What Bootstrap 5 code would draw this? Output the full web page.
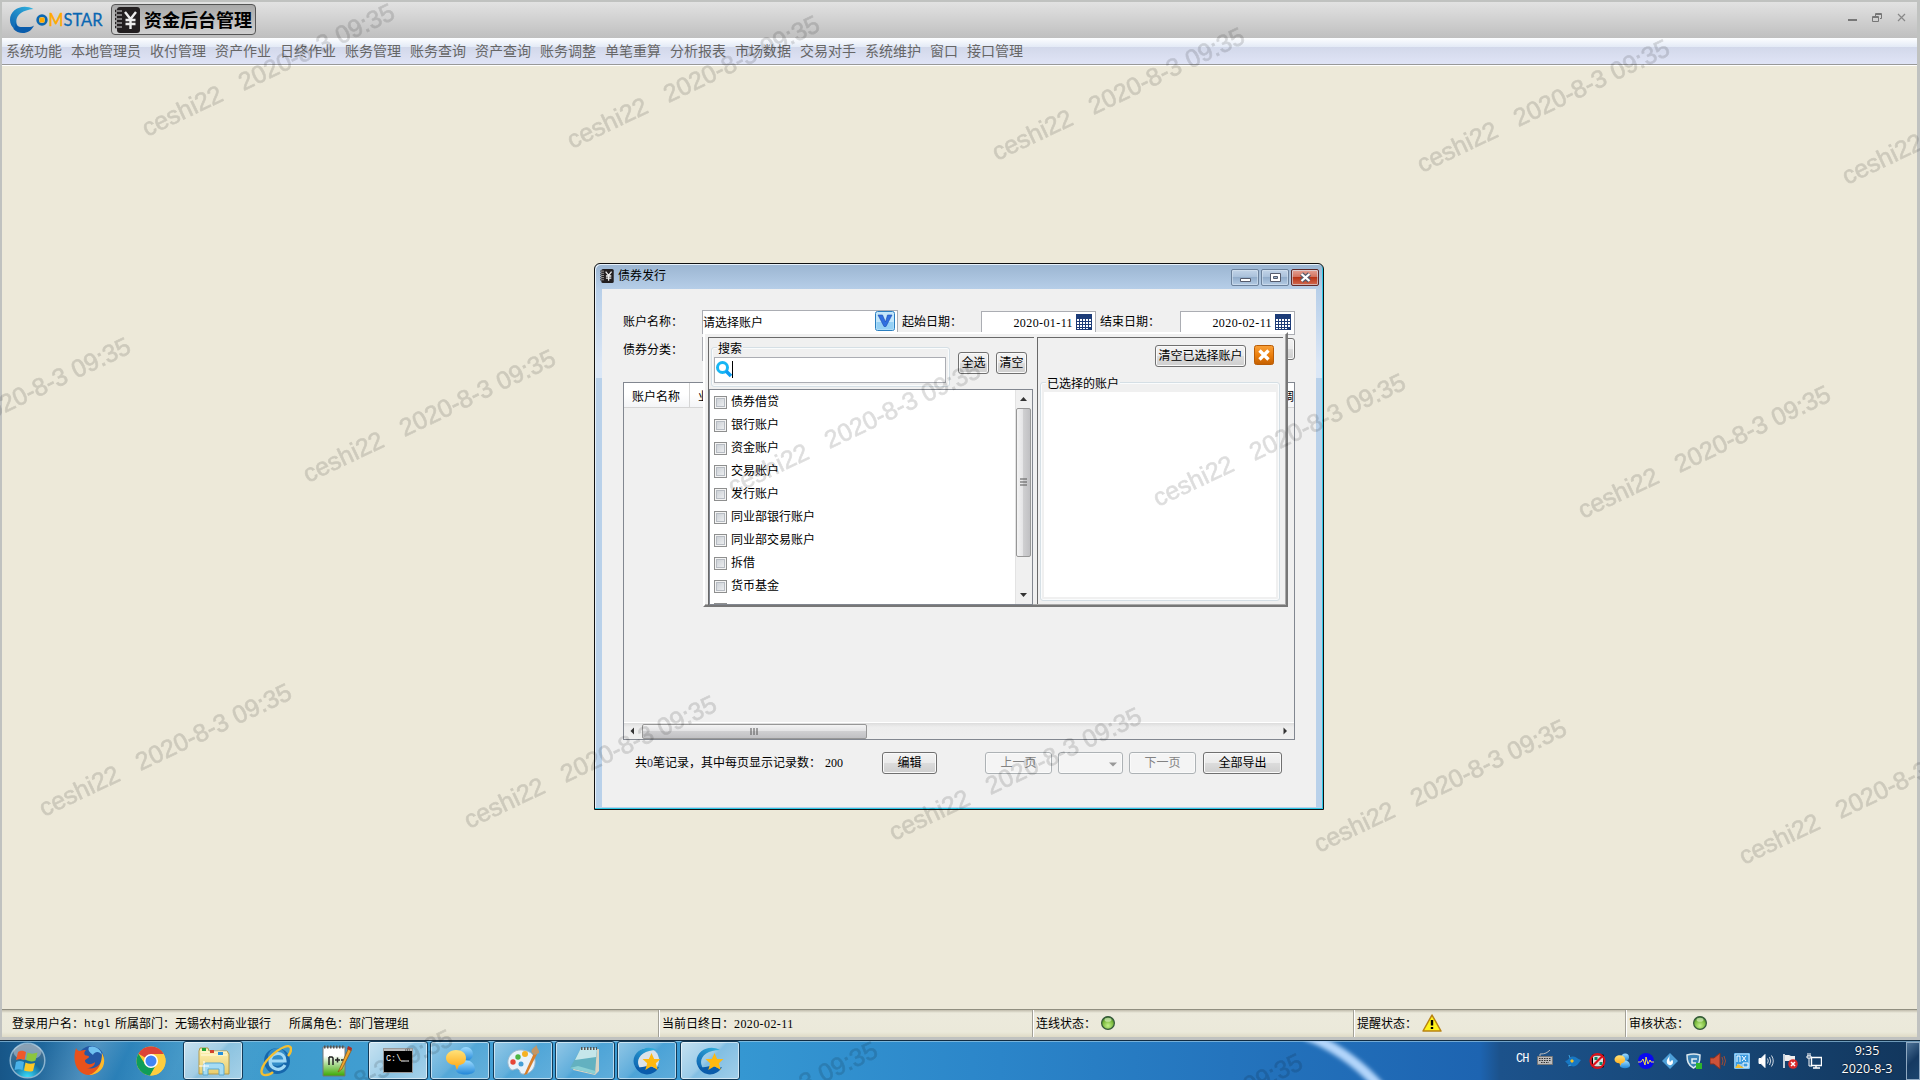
<!DOCTYPE html>
<html lang="zh-CN">
<head>
<meta charset="utf-8">
<title>资金后台管理</title>
<link rel="stylesheet" href="https://cdn.jsdelivr.net/npm/bootstrap@5.3.0/dist/css/bootstrap.min.css">
<style>
body{width:1920px;height:1080px;overflow:hidden;font:12px/16px "Liberation Serif","Noto Sans CJK SC",sans-serif;color:#000;background:#ede9d9;position:relative}
svg{display:block;flex:none}
.app-window{height:1040px;border:solid #c0c2c0;border-width:2px 3px 3px 2px;box-shadow:inset 0 0 0 0}
.app-head{height:36px;background:linear-gradient(#e2e2e2,#bfbfbf);padding:2px 0 0 8px}
.module-btn{width:145px;height:31px;border:1px solid #555;border-radius:4px;background:linear-gradient(#a9a9a9,#cfcfcf);font:700 18px/26px "Noto Sans CJK SC",sans-serif;padding-left:3px;gap:4px;margin-left:8px}
.module-btn span{margin-top:-2px}
.win-ctl{gap:15px;padding:9px 11px 0 0}
.menu-strip{height:28px;background:linear-gradient(#fdfeff 0,#e3eaf6 9px,#d2d8ea 9px,#e0e4f6 26px);border-bottom:1px solid #fff;box-shadow:inset 0 -1px #999;font:14px/25px "Noto Sans CJK SC",sans-serif;color:#666;gap:9px;padding-left:4px}
.status-strip{height:28px;border-top:1px solid #918f80;background:linear-gradient(#c0bcac 0,#eceadc 3px,#ebe9da 22px,#dedac6 27px);line-height:28px}
.status-strip>div+div{border-left:1px solid #a3a197;box-shadow:inset 1px 0 #fff;padding-left:3px}
.dt{letter-spacing:.4px}
/* dialog */
.dlg{position:absolute;left:594px;top:263px;width:730px;height:547px;border:1px solid #111;border-radius:6px 6px 0 0;background:linear-gradient(#9bb5d1,#b7cfe9 26px,#dbe7f6 100px,#dbe7f6 114px,#b9d1ea 114px);box-shadow:inset -1px -1px #2bc8e6,inset 1px 1px #e8f2fb}
.dlg-title{height:25px;padding-left:5px;font:12px/22px "Noto Sans CJK SC",sans-serif;gap:4px}
.cap-btn{width:28px;height:17px;border:1px solid #6c819b;border-radius:2px;background:linear-gradient(#c2d4e8,#a9c0da 48%,#92adcb 50%,#b4cbe4);box-shadow:inset 0 0 0 1px #d7e4f299}
.cap-x{border-color:#602a2a;background:linear-gradient(#e5a295,#d2705d 48%,#b83417 50%,#d26a50)}
.dlg-body{margin:0 7px 2px 7px;height:518px;background:#f0f0f0;padding:21px 21px 0 21px}
.fld{background:#fff;border:1px solid #abadb3;height:24px}
.grid-box{width:672px;height:358px;border:1px solid #828790;margin-top:19px}
.grid-head{height:25px;background:linear-gradient(#fff 45%,#f4f5f7);border-bottom:1px solid #d5d5d5;line-height:28px}
.xbtn{height:22px;border:1px solid #707070;border-radius:3px;background:linear-gradient(#f3f3f3,#ebebeb 48%,#dcdcdc 50%,#cfcfcf);box-shadow:inset 0 0 0 1px #fafafa;text-align:center;line-height:20px;white-space:nowrap;flex:none}
.xoff{border-color:#adb2b5;background:#f4f4f4;color:#838383}
.hbar{height:17px;background:linear-gradient(#dcdcdc,#ededed 4px,#efefef);border-top:1px solid #fff}
.hthumb{width:225px;height:15px;border:1px solid #979797;border-radius:2px;background:linear-gradient(#f4f4f4,#e4e4e6 45%,#cfcfd1 50%,#c0c0c3)}
/* drop-down panel */
.pick{position:absolute;left:703px;top:332px;width:585px;height:275px;background:#f0f0f0;border-style:solid;border-width:2px 2px 2px 2px;border-color:#fff #777 #777 #fff;padding:3px 2px 0 3px;box-shadow:inset -1px -1px #aaa}
.pane-l{width:326px;height:268px;border-top:1px solid #696969;border-left:1px solid #696969}
.pane-r{width:246px;height:267px;border-top:1px solid #696969;border-left:1px solid #696969;margin-left:3px}
.grp{border:1px solid #d5dfe5;border-radius:3px;position:relative;box-shadow:inset 0 0 0 1px #fafcfd}
.grp>label{position:absolute;left:5px;top:-7px;background:#f0f0f0;padding:0 1px;line-height:16px}
.srch{height:26px;width:232px;margin:9px 0 0 2px;background:#fff;border:1px solid #abadb3;padding:3px 0 0 1px}
.items{height:216px;width:324px;border:1px solid #828790;background:#fff;overflow:hidden;margin-top:2px}
.items ul{padding:1px 0 0 4px;margin:0;list-style:none}
.items li{height:23px;line-height:23px;display:flex;align-items:center;gap:4px}
.ck{width:13px;height:13px;border:1px solid #8e8f8f;background:linear-gradient(135deg,#c5cad0,#f4f5f6);box-shadow:inset 0 0 0 1px #f4f4f4,inset 0 0 0 2px #b7bcc3;flex:none;margin-top:-1px}
.vbar{width:17px;background:#f0f0f0;border-left:1px solid #e3e3e3}
.vthumb{width:15px;height:149px;border:1px solid #979797;border-radius:2px;background:linear-gradient(90deg,#f4f4f4,#e4e4e6 45%,#cfcfd1 50%,#c0c0c3)}
/* taskbar */
.tbar{height:40px;position:relative;background:linear-gradient(115deg,transparent 40px,#ffffff30 90px,transparent 120px,#ffffff14 170px,transparent 260px),linear-gradient(90deg,#175688 0,#2679b2 90px,#3d9acb 220px,#429fd4 450px,#3597d2 740px,#2b85c9 1000px,#2474bd 1230px,#1d64b1 1480px,#1c528b 1500px,#174777 1700px,#12365c 1920px);border-top:1px solid #112c42;box-shadow:inset 0 1px #9ccbe6aa}
.tk{width:62px;height:39px;display:flex;align-items:center;justify-content:center;flex:none}
.tk.on{width:60px;margin-right:2px;height:39px;border:1px solid #123a58;border-radius:3px;box-shadow:inset 0 0 0 1px #ffffff90;background:linear-gradient(135deg,#ffffff70,#ffffff30 45%,#ffffff18 50%,#ffffff30)}
.tk.act{background:linear-gradient(135deg,#ffffffb5,#ffffff80 45%,#ffffff60 50%,#ffffff88)}
.swoosh{position:absolute;left:1290px;top:0}
.clock{font:12.5px/18px "Open Sans",sans-serif;color:#fff;text-align:center;width:70px;text-shadow:0 0 2px #000}
.peek{width:14px;height:38px;border:1px solid #8fa9c2;background:linear-gradient(135deg,#4f7397,#153a62 50%,#1c456e);margin-left:4px;margin-top:1px}
.marks{position:absolute;left:0;top:0;pointer-events:none}
</style>
<script src="https://cdn.jsdelivr.net/npm/bootstrap@5.3.0/dist/js/bootstrap.bundle.min.js"></script>
</head>
<body>
<svg width="0" height="0" class="position-absolute">
<defs>
<linearGradient id="gc" x1="1" y1="0" x2="0" y2="1"><stop offset="0" stop-color="#35b5e0"/><stop offset="1" stop-color="#0b5fae"/></linearGradient>
<radialGradient id="gg" cx=".5" cy=".7" r=".7"><stop offset="0" stop-color="#c2f08a"/><stop offset=".6" stop-color="#7cba3e"/><stop offset="1" stop-color="#2c6a1e"/></radialGradient>
<radialGradient id="gorb" cx=".5" cy="1" r=".9"><stop offset="0" stop-color="#3be4ff"/><stop offset=".5" stop-color="#15699c"/><stop offset="1" stop-color="#4d6f8d"/></radialGradient>
<linearGradient id="gor" x1="0" y1="0" x2="0" y2="1"><stop offset="0" stop-color="#f9a13a"/><stop offset=".5" stop-color="#ec7f0d"/><stop offset="1" stop-color="#c45f00"/></linearGradient>
<linearGradient id="gbl" x1="0" y1="0" x2="0" y2="1"><stop offset="0" stop-color="#9edcff"/><stop offset="1" stop-color="#2287d8"/></linearGradient>
<linearGradient id="gye" x1="0" y1="0" x2="0" y2="1"><stop offset="0" stop-color="#ffe27a"/><stop offset="1" stop-color="#ffa40c"/></linearGradient>
<linearGradient id="gfo" x1="0" y1="0" x2="0" y2="1"><stop offset="0" stop-color="#fff3b8"/><stop offset="1" stop-color="#e9cd6c"/></linearGradient>
<linearGradient id="gn" x1="0" y1="0" x2="0" y2="1"><stop offset=".3" stop-color="#fff"/><stop offset="1" stop-color="#3aa800"/></linearGradient>
<symbol id="book" viewBox="0 0 25 26"><rect x="2" y="0" width="23" height="26" rx="3" fill="#231f20"/><path d="M0 4h6M0 8h6M0 12h6M0 16h6M0 20h6" stroke="#231f20" stroke-width="2.4"/><path d="M1 4h6M1 8h6M1 12h6M1 16h6M1 20h6" stroke="#ddd" stroke-width="1.2"/><path d="M10 5l5.500 7 5.500-7M15.500 12v10M10.500 13h10M10.500 17h10" stroke="#eee" stroke-width="2.400" fill="none"/></symbol>
<symbol id="cal" viewBox="0 0 16 16"><path fill="#1d3c78" d="M0 0h16v16H0z"/><path fill="#fff" d="M1 5h2v2H1zm3 0h2v2H4zm3 0h2v2H7zm3 0h2v2h-2zm3 0h2v2h-2zM1 8h2v2H1zm3 0h2v2H4zm3 0h2v2H7zm3 0h2v2h-2zM1 11h2v2H1zm3 0h2v2H4zm3 0h2v2H7zm6-3h2v2h-2zM10 11h2v2h-2zm3 0h2v2h-2zM1 14h2v1H1zm3 0h2v1H4zm3 0h2v1H7zm3 0h2v1h-2z"/></symbol>
<symbol id="star" viewBox="0 0 30 30"><path d="M25 4C15-1.500 2 4 1.500 15c0 4 2 7 5 9 1-2 1-3 0-5C4 11 12 4 25 4z" fill="url(#gc)"/><path d="M3 20c4 11 19 11 24 1-4 2-7-1-11-1-5 0-6 3-13 0z" fill="#0a5cab"/><path d="M19.500 7l2.600 6h6.400l-4.700 4.200 2 6.800-6.300-3.700-6.200 3.700 1.900-6.800-4.700-4.200h6.400z" fill="#ffb90f"/></symbol>
<symbol id="chat" viewBox="0 0 30 30"><circle cx="21" cy="8" r="7" fill="url(#gbl)"/><path d="M11 24c0-13 19-13 19 0 0 6-19 6-19 0z" fill="url(#gbl)"/><path d="M11 4c6 0 10 3 10 8s-4 7-7 7l-2 5-2-5c-5 0-9-3-9-7s4-8 10-8z" fill="url(#gye)"/></symbol>
<symbol id="ball" viewBox="0 0 14 14"><circle cx="7" cy="7" r="6.400" fill="url(#gg)" stroke="#35593c" stroke-width="1.200"/><ellipse cx="7" cy="3.800" rx="3.500" ry="2" fill="#e3f7d0" opacity=".6"/></symbol>
</defs>
</svg>

<div class="app-window d-flex flex-column">
  <header class="app-head d-flex align-items-start">
    <svg width="93" height="30" viewBox="0 0 93 30"><path d="M23.500 5C13-.5 0 5 0 16c0 4 2 7 4.500 9C8 27 8 24 7 21 4 13 11 6 23.500 5z" fill="url(#gc)"/><path d="M5 17c1 4 3 6 7 6 4-.5 9 1 12-1.500-4 9-15 10-21 3C5 25 6 22 5 17z" fill="#0a5cab"/><circle cx="32" cy="16" r="4.300" fill="none" stroke="#0a67b2" stroke-width="2.800"/><path d="M29.500 13.500h5v5h-5z" fill="#fa0"/><text x="38.500" y="21.500" font-family="Lato" font-size="17.500" textLength="15" lengthAdjust="spacingAndGlyphs" fill="#fa0" stroke="#fa0" stroke-width=".5">M</text><text x="53.500" y="21.500" font-family="Lato" font-size="17.500" textLength="39" lengthAdjust="spacingAndGlyphs" fill="#0a67b2" stroke="#0a67b2" stroke-width=".3">STAR</text></svg>
    <div class="module-btn d-flex align-items-center"><svg width="25" height="26"><use href="#book"/></svg><span>资金后台管理</span></div>
    <div class="win-ctl d-flex ms-auto">
      <svg width="9" height="9"><path d="M0 7h9" stroke="#777" stroke-width="2"/></svg>
      <svg width="10" height="9" fill="none" stroke="#777"><path d="M3.500 3V.5h6v5H8M3 1.500h7M.5 3.500h6v5h-6zM0 4.500h7"/></svg>
      <svg width="9" height="9"><path d="M1 1l7 7M8 1L1 8" stroke="#888" stroke-width="1.200"/></svg>
    </div>
  </header>
  <nav class="menu-strip d-flex">
    <span>系统功能</span><span>本地管理员</span><span>收付管理</span><span>资产作业</span><span>日终作业</span><span>账务管理</span><span>账务查询</span><span>资产查询</span><span>账务调整</span><span>单笔重算</span><span>分析报表</span><span>市场数据</span><span>交易对手</span><span>系统维护</span><span>窗口</span><span>接口管理</span>
  </nav>
  <main class="flex-fill"></main>
  <footer class="status-strip d-flex">
    <div style="width:656px;padding-left:10px" class="d-flex"><span>登录用户名：</span><span style="width:31px;font:11px/29px 'Liberation Mono',monospace">htgl</span><span>所属部门：无锡农村商业银行</span><span style="margin-left:18px">所属角色：部门管理组</span></div>
    <div style="width:374px">当前日终日：<span class="dt">2020-02-11</span></div>
    <div style="width:321px" class="d-flex">连线状态：<svg width="14" height="14" style="margin:6px 0 0 5px"><use href="#ball"/></svg></div>
    <div style="width:272px" class="d-flex">提醒状态：<svg width="20" height="18" viewBox="0 0 20 18" style="margin:4px 0 0 5px"><path d="M10 1l9 16H1z" fill="#fff31a" stroke="#b98312" stroke-width="1.500" stroke-linejoin="round"/><path d="M10 6v5.500M10 13v2" stroke="#000" stroke-width="2.400"/></svg></div>
    <div class="d-flex flex-fill">审核状态：<svg width="14" height="14" style="margin:6px 0 0 4px"><use href="#ball"/></svg></div>
  </footer>
</div>

<footer class="tbar d-flex">
  <svg class="swoosh" width="110" height="39"><defs><filter id="bl"><feGaussianBlur stdDeviation="2"/></filter></defs><path d="M8-6Q50 10 82 46" stroke="#b3d6fb" stroke-width="10" fill="none" filter="url(#bl)" transform="translate(8 0)"/></svg>
  <div class="tk" style="width:54px"><svg width="37" height="37" viewBox="0 0 37 37"><circle cx="18.500" cy="18.500" r="17.300" fill="url(#gorb)" stroke="#8bb4cf" stroke-width="1.500"/><ellipse cx="18.500" cy="10" rx="14" ry="8" fill="#fff" opacity=".35"/><path d="M9 10c3-2 5-1.500 8 0l-1.500 8c-3-1.500-5-1.500-8.500 0z" fill="#f0592a"/><path d="M18.500 10.500c3 1.500 6 1.500 10 0l-2 8c-3 1.500-6 1-9.500-.5z" fill="#8cc63f"/><path d="M7 20c3-1.500 5.500-1 8 0l-1.500 8c-2.500-1-4.500-1-8 0z" fill="#4ab2ea"/><path d="M16.500 20.500c3 1.500 6 1.500 9.500.5l-2 8c-3 1-6 .5-9-.5z" fill="#fcc826"/></svg></div>
  <div class="tk" style="width:70px"><svg width="31" height="31" viewBox="0 0 31 31"><circle cx="17" cy="14" r="13" fill="#2458a5"/><path d="M15 2c6-2 12 2 13 8-3-5-8-3-9 0-2-2-6-4-4-8z" fill="#6fc0f0"/><path d="M2 3c1 2 2 3 4 3 2-1 4-1 6-1-2 2-2 4-1 5 1 1 4 0 4 2-1 2-4 2-4 4 1 4 7 4 10 1 0 4-4 6-8 6 8 2 15-3 16-12 2 11-5 19-14 19C5 30-3 19 2 3z" fill="#e8521b"/><path d="M28 8c6 11-1 22-13 22 9-3 13-11 13-22z" fill="#fcb92a"/></svg></div>
  <div class="tk" style="width:54px"><svg width="30" height="30" viewBox="0 0 30 30"><circle cx="15" cy="15" r="14.500" fill="#fc3"/><path d="M15 15L2.500 7.700A14.500 14.500 0 0 1 27.700 8H15z" fill="#dc4437"/><path d="M2.400 7.800A14.500 14.500 0 0 0 14 29.500l6.500-11.500L9 18z" fill="#0f9d58"/><path d="M15 8h12.700a14.500 14.500 0 0 1-13.500 21.500L21 18z" fill="#fecd3f"/><circle cx="15" cy="15" r="7" fill="#fff"/><circle cx="15" cy="15" r="5.500" fill="#4285f4"/></svg></div>
  <div class="tk on act" style="margin-left:5px"><svg width="33" height="30" viewBox="0 0 33 30"><path d="M2 5l1-3h8l1 3h18l2 3v20H2z" fill="url(#gfo)" stroke="#b59a4a"/><path d="M4 9h26M4 6h26" stroke="#fffbe0"/><path d="M5 2h4v3H5z" fill="#21a336"/><path d="M13 4h4v3h-4z" fill="#d3422c"/><path d="M21 6h5v3h-5z" fill="#2690dc"/><path d="M6 29v-9q0-3 3-3h14q4 0 4 3v9h-5v-6H11v6z" fill="#a5dcf4" stroke="#5ba8d0"/><path d="M2 20h10M7 15v10" stroke="#fff"/></svg></div>
  <div class="tk" style="width:61px"><svg width="32" height="32" viewBox="0 0 32 32"><circle cx="17" cy="16" r="13" fill="#1667ac"/><circle cx="17" cy="12" r="9" fill="#4fb3e6" opacity=".5"/><path d="M11 16h14c0-10-14-10-15 0 0 9 11 11 15 4" fill="none" stroke="#9fd8f6" stroke-width="3.200"/><path d="M6 30c-7 1-6-8 4-18C20 2 31-2 31 4c0 3-2 6-3 7M6 30c3 0 5-1 7-3" fill="none" stroke="#f4bf32" stroke-width="2.400"/></svg></div>
  <div class="tk"><svg width="30" height="32" viewBox="0 0 30 32"><path d="M1 2h22v29H1z" fill="url(#gn)" stroke="#777"/><path d="M2 2h21" stroke="#555" stroke-width="3" stroke-dasharray="1.500 1.500"/><path d="M7 20v-8M7 12h3l1 1v7M13 15h5M15.500 12.500v5M19 15h4" stroke="#222" stroke-width="1.500" fill="none"/><path d="M27 2l-9 21-2 4 4-3L30 4z" fill="#f0a62e" stroke="#8a5a19" stroke-width=".8"/><path d="M26 1l4 2-1 3-4-2z" fill="#a9322c"/></svg></div>
  <div class="tk on act"><svg width="30" height="25" viewBox="0 0 30 25"><path d="M.5.500h29v24H.5z" fill="#000" stroke="#999"/><path d="M1 2h28" stroke="#bbb" stroke-width="2"/><path d="M22 2h6" stroke="#444" stroke-dasharray="1 1"/><text x="3" y="13" font-family="Liberation Mono" font-size="8.500" fill="#fff">C:\</text><path d="M18 13h8" stroke="#fff"/></svg></div>
  <div class="tk on"><svg width="30" height="30"><use href="#chat"/></svg></div>
  <div class="tk on" style="margin-left:1px"><svg width="33" height="31" viewBox="0 0 33 31"><path d="M15 5C5 4-2 14 2 22c3 6 6 1 9 2 3 2 1 4 4 5 10 1 14-8 13-14-1-7-6-9-13-10z" fill="#e8f2fa" stroke="#9db9cc"/><circle cx="6" cy="17" r="2.700" fill="#e64538"/><circle cx="11" cy="12" r="2.700" fill="#4bb543"/><circle cx="18" cy="9" r="3" fill="#f6b223"/><circle cx="14" cy="19" r="2.500" fill="#459ed5"/><path d="M27 8L17 30l3-1L30 9z" fill="#d67e2b"/><path d="M25 8c-2-4 2-5 5-8-1 3 3 5 2 8l-4 2z" fill="#c19767"/></svg></div>
  <div class="tk on"><svg width="30" height="30" viewBox="0 0 30 30"><path d="M11 3h18v22l-4 4-22-5z" fill="#d9d4c4"/><path d="M11 2h16l-2 26L0 22z" fill="#63b1c0"/><path d="M11 2h16l-1 9L5 14z" fill="#c5e6ea"/><path d="M11 2.500h16" stroke="#555" stroke-width="3" stroke-dasharray="1.500 1.500"/><path d="M0 22l25 6 .5-3L8 20z" fill="#8bd0d4"/></svg></div>
  <div class="tk on"><svg width="30" height="30" viewBox="0 0 30 30"><circle cx="15" cy="14" r="12" fill="#dce3ea"/><use href="#star"/></svg></div>
  <div class="tk on act" style="margin-left:1px"><svg width="30" height="30"><use href="#star"/></svg></div>

  <div class="ms-auto d-flex align-items-center text-white" style="gap:8px;padding-top:1px">
    <span style="font:12px/16px 'Liberation Mono',monospace;margin-top:-4px;width:13px;letter-spacing:-1px">CH</span>
    <svg width="16" height="16" viewBox="0 0 16 16" style="margin:-6px 4px 0 0"><path d="M.5 6.500h15v8H.5z" fill="#bcbcbc" stroke="#777"/><path d="M2 8.500h12M2 10.500h12M4 12.500h8" stroke="#333" stroke-dasharray="1.500 1"/><path d="M3 6V4q4 0 6-1t4-3" fill="none" stroke="#bbb"/></svg>
    <svg width="16" height="16" viewBox="0 0 16 16"><path d="M0 8c4 0 4-5 8-4.500C12 4 12 6 16 7l-3 4c-3 4-9 3-13-3z" fill="#1878c4"/><path d="M5 5l-1-3M6 12l-3 1" stroke="#3ba1df"/><path d="M7 6l2 2-2 2-2-2z" fill="#f6c521"/></svg>
    <svg width="17" height="16" viewBox="0 0 16 16"><path d="M3 2h11v12H3z" fill="#ddd" stroke="#000"/><path d="M5 4h3v3H5zM10 9h3v3h-3z" fill="#0b8a6b"/><circle cx="8" cy="8" r="7" fill="none" stroke="#d9111b" stroke-width="2"/><path d="M3 13L13 3" stroke="#d9111b" stroke-width="2.200"/></svg>
    <svg width="16" height="16"><use href="#chat"/></svg>
    <svg width="16" height="16"><circle cx="8" cy="8" r="8" fill="#0909f0"/><path d="M0 9h3l2-3 2 6 1-8 2 7 2-4 1 2h3" fill="none" stroke="#eee04f"/></svg>
    <svg width="16" height="16" viewBox="0 0 16 16"><path d="M8 0l8 8-8 8-8-8z" fill="#4d9fd8"/><path d="M8 2c-1 3-4 4-3 8 1 3 6 3 6-1 0-2-1-2-1-2L8 9c-1-2-1-4 0-7z" fill="#fff"/></svg>
    <svg width="16" height="16" viewBox="0 0 16 16"><path d="M1 2q7-2 13 0c0 7-1 10-6.500 13C2 12 1 8 1 2z" fill="#3a81b5" stroke="#dce8ee" stroke-width="1.500"/><path d="M11 6H6v4h4" fill="none" stroke="#e8f2f5" stroke-width="1.500"/><path d="M10 10h6v6h-6z" fill="#2db52d"/></svg>
    <svg width="16" height="16" viewBox="0 0 16 16"><path d="M0 5h4l6-5v16l-6-5H0z" fill="#cc5239" stroke="#833023"/><path d="M12 4q2 4 0 8M14 3q3 5 0 10" fill="none" stroke="#a34a33"/></svg>
    <svg width="16" height="16" viewBox="0 0 16 16"><path d="M0 0h16v16H0z" fill="#3a9be0"/><path d="M1 1h14v14H1z" fill="none" stroke="#cae9ff"/><path d="M3 9V3h3v6M8 3l4 5M12 3L8 8M3 12h5M9 10h5v4H9z" fill="none" stroke="#fff"/><path d="M1 15h9l-6-4z" fill="#f4bc31"/></svg>
    <svg width="16" height="16" viewBox="0 0 16 16" fill="none" stroke="#fff"><path d="M1 5.500h2l4-4v13l-4-4H1z" fill="#fff"/><path d="M9.500 5.500q1.500 2.500 0 5M11.500 4q2.500 4 0 8M13.500 2.500q3.500 5.500 0 11" opacity=".8"/></svg>
    <svg width="16" height="16" viewBox="0 0 16 16"><path d="M2 1v14" stroke="#fff" stroke-width="1.500"/><path d="M3 2h4l2 1h4v6H8L7 8H3z" fill="#eee"/><circle cx="11" cy="11" r="4.800" fill="#d92a2a"/><path d="M9 9l4 4M13 9l-4 4" stroke="#fff" stroke-width="1.500"/></svg>
    <svg width="16" height="16" viewBox="0 0 16 16" fill="none" stroke="#fff"><path d="M5.500 4.500h10v8h-10zM10 13v2M7 15h7" stroke-width="1.400"/><path d="M2 0v3M4 0v3M1 3h4v2H1zM3 5v8h3"/></svg>
    <div class="clock" style="margin:-2px 0 0 2px"><div>9:35</div><div>2020-8-3</div></div>
  </div>
  <div class="peek me-0"></div>
</footer>

<section class="dlg">
  <div class="dlg-title d-flex">
    <svg width="14" height="14" style="margin-top:5px"><use href="#book"/></svg><span>债券发行</span>
    <div class="d-flex ms-auto" style="gap:2px;padding:5px 4px 0 0">
      <div class="cap-btn"><svg width="26" height="15"><path d="M8.500 8.500h10v3h-10z" fill="#fff" stroke="#555b6c"/></svg></div>
      <div class="cap-btn"><svg width="26" height="15"><path d="M8.500 3.500h10v8h-10z" fill="#fff" stroke="#555b6c"/><path d="M11.500 6.500h4v2h-4z" fill="#9fb6cf" stroke="#555b6c"/></svg></div>
      <div class="cap-btn cap-x"><svg width="26" height="15"><path d="M9.500 4l8 7M17.500 4l-8 7" stroke="#555b6c" stroke-width="4.500"/><path d="M9.500 4l8 7M17.500 4l-8 7" stroke="#fff" stroke-width="2.300"/></svg></div>
    </div>
  </div>
  <div class="dlg-body">
    <div class="d-flex" style="line-height:25px">
      <span style="width:79px">账户名称：</span>
      <div class="fld d-flex" style="width:196px;line-height:21px"><span class="flex-fill" style="font-family:'Noto Sans CJK SC'">请选择账户</span>
        <svg width="20" height="20" viewBox="0 0 20 20" style="margin:0 2px 0 0"><rect x=".5" y=".5" width="19" height="19" rx="2" fill="#c4e7fb" stroke="#2b7fc0"/><path d="M1.500 11h17v7.500h-17z" fill="#94d0f5"/><path d="M3 4h4.500L10.500 11l2-7H17l-6 11.500H9z" fill="#2f6fe0" stroke="#1b4cb0" stroke-width=".6"/></svg></div>
      <span style="width:83px;padding-left:4px">起始日期：</span>
      <div class="fld d-flex justify-content-end" style="width:115px;margin:1px 0 0 0;line-height:22px;gap:3px;padding-right:3px"><span class="dt">2020-01-11</span><svg width="16" height="16" style="margin-top:2px"><use href="#cal"/></svg></div>
      <span style="width:84px;padding-left:4px">结束日期：</span>
      <div class="fld d-flex justify-content-end" style="width:115px;margin-top:1px;line-height:22px;gap:3px;padding-right:3px"><span class="dt">2020-02-11</span><svg width="16" height="16" style="margin-top:2px"><use href="#cal"/></svg></div>
    </div>
    <div class="d-flex" style="margin-top:2px;line-height:26px"><span style="width:79px">债券分类：</span><div class="fld" style="width:196px"></div><div class="xbtn ms-auto" style="width:80px;margin-top:1px"></div></div>
    <div class="grid-box d-flex flex-column">
      <div class="grid-head d-flex"><span style="width:66px;padding-left:8px;border-right:1px solid #d5d5d5">账户名称</span><span style="padding-left:8px">业</span><span class="ms-auto overflow-hidden text-nowrap" style="width:8px;direction:rtl">调</span></div>
      <div class="hbar d-flex mt-auto align-items-center">
        <svg width="18" height="14"><path d="M10 3.500v7L6.500 7z" fill="#333"/></svg>
        <div class="hthumb"><svg class="mx-auto" width="8" height="13" style="position:relative;left:-1px"><path d="M1 3v7M4 3v7M7 3v7" stroke="#555"/></svg></div>
        <svg width="14" height="14" class="ms-auto"><path d="M3.500 3.500v7L7 7z" fill="#333"/></svg>
      </div>
    </div>
    <div class="d-flex" style="margin-top:12px;line-height:22px;padding-left:12px">
      <span style="width:190px">共<span style="color:#335">0</span>笔记录，其中每页显示记录数：</span><span style="width:57px">200</span>
      <div class="xbtn" style="width:55px">编辑</div>
      <div class="xbtn xoff" style="width:67px;margin-left:48px">上一页</div>
      <div class="xbtn xoff" style="width:65px;margin-left:6px"><svg class="ms-auto" width="18" height="20"><path d="M5 9.500h8l-4 4z" fill="#999"/></svg></div>
      <div class="xbtn xoff" style="width:67px;margin-left:6px">下一页</div>
      <div class="xbtn" style="width:79px;margin-left:7px">全部导出</div>
    </div>
  </div>
</section>

<section class="pick d-flex">
  <div class="pane-l">
    <div class="d-flex">
      <div class="grp" style="width:239px;height:40px;margin:9px 0 0 2px"><label>搜索</label>
        <div class="srch d-flex"><svg width="16" height="17" viewBox="0 0 16 17"><circle cx="6.500" cy="6.500" r="5" fill="none" stroke="#16b6f4" stroke-width="3"/><path d="M10 10l5 5" stroke="#0d9cf2" stroke-width="3.600"/></svg><svg width="2" height="17"><path d="M.5 0v17" stroke="#000"/></svg></div>
      </div>
      <div class="xbtn" style="width:31px;margin:14px 0 0 8px">全选</div><div class="xbtn" style="width:31px;margin:14px 0 0 7px">清空</div>
    </div>
    <div class="items d-flex">
      <ul class="flex-fill"><li><i class="ck"></i>债券借贷</li><li><i class="ck"></i>银行账户</li><li><i class="ck"></i>资金账户</li><li><i class="ck"></i>交易账户</li><li><i class="ck"></i>发行账户</li><li><i class="ck"></i>同业部银行账户</li><li><i class="ck"></i>同业部交易账户</li><li><i class="ck"></i>拆借</li><li><i class="ck"></i>货币基金</li><li><i class="ck"></i></li></ul>
      <div class="vbar d-flex flex-column"><svg width="16" height="18"><path d="M4 11h7L7.500 7z" fill="#333"/></svg><div class="vthumb d-flex align-items-center"><svg width="13" height="9"><path d="M3 1h7M3 4h7M3 7h7" stroke="#555"/></svg></div><svg class="mt-auto" width="16" height="18"><path d="M4 7h7L7.500 11z" fill="#333"/></svg></div>
    </div>
  </div>
  <div class="pane-r">
    <div class="d-flex" style="padding:7px 0 0 117px;gap:8px"><div class="xbtn" style="width:91px">清空已选择账户</div>
      <svg width="20" height="20" viewBox="0 0 20 20"><rect x=".5" y=".5" width="19" height="19" rx="2" fill="url(#gor)" stroke="#b95c06"/><path d="M5.500 5.500l9 9M14.500 5.500l-9 9" stroke="#fff" stroke-width="3.400"/></svg></div>
    <div class="grp" style="width:240px;height:219px;margin:15px 0 0 2px;padding:9px 3px 3px"><label>已选择的账户</label><div class="bg-white h-100"></div></div>
  </div>
</section>

<svg class="marks" id="marks" width="1920" height="1080" fill="#000" stroke="#000" stroke-width=".7" opacity=".13" font-family="Liberation Sans" font-size="25"></svg>
<script>
// Repeat the user/time stamp over the whole desktop on a slanted lattice.
const layer = document.getElementById('marks');
for (let j = 0; j < 4; j++) for (let i = -3; i < 5; i++) {
  const x = 147 + 425 * i + 161 * j, y = 137 + 12 * i + 346 * j;
  if (x < -200 || x > 1920 || y > 1190) continue;
  const t = document.createElementNS('http://www.w3.org/2000/svg', 'text');
  t.setAttribute('transform', `translate(${x} ${y}) rotate(-25.5)`);
  t.style.whiteSpace = 'pre';
  t.textContent = 'ceshi22   2020-8-3 09:35';
  layer.appendChild(t);
}
</script>
</body>
</html>
